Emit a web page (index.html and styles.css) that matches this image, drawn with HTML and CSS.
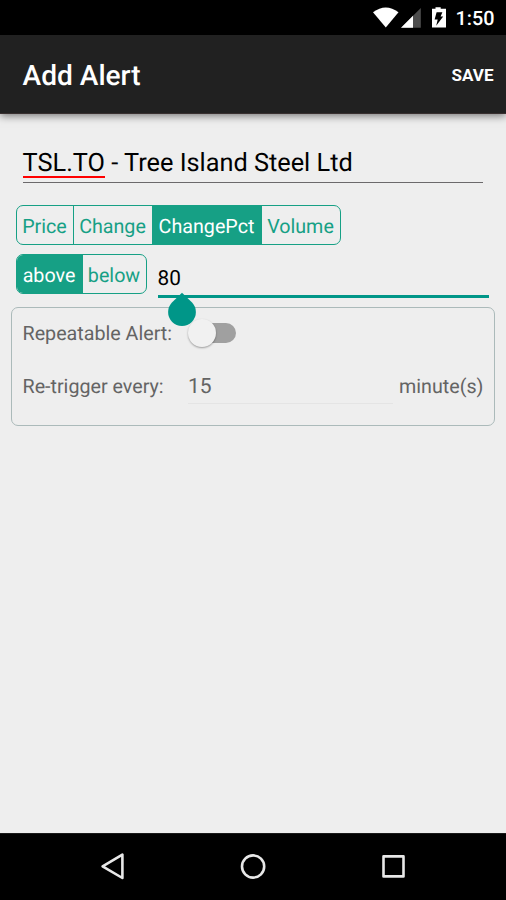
FILE: index.html
```html
<!DOCTYPE html>
<html lang="en">
<head>
<meta charset="utf-8">
<title>Add Alert</title>
<link rel="stylesheet" href="styles.css">
</head>
<body>
<div class="screen">
  <div class="status">
    <svg class="status-icons" viewBox="0 0 80 35" width="80" height="35">
      <path d="M3 12.2Q15.8 2.8 28.5 12.2L15.8 27.5Z" fill="#fff"/>
      <path d="M50.8 8V27.7H31Z" fill="#4d4d4d"/>
      <path d="M43 15.8V27.7H31Z" fill="#fff"/>
      <path d="M65.5 7.3h5.2v1.5H76v18.7H62V8.8h3.5Z" fill="#fff"/>
      <path d="M66.6 12.3h5.8l-1.8 4.3h2.6l-7 9.2 1.5-6.2h-3.1Z" fill="#000"/>
    </svg>
    <span class="clock">1:50</span>
  </div>
  <header class="appbar">
    <h1 class="title">Add Alert</h1>
    <button class="save">SAVE</button>
  </header>
  <main class="content">
    <div class="name"><span class="name-text"><span class="misspelt">TSL.TO</span> - Tree Island Steel Ltd</span></div>
    <div class="segments kind">
      <span class="seg">Price</span><span class="seg">Change</span><span class="seg on">ChangePct</span><span class="seg">Volume</span>
    </div>
    <div class="condition">
      <div class="segments direction"><span class="seg on">above</span><span class="seg">below</span></div>
      <div class="value"><span class="value-text">80</span>
        <svg class="handle" viewBox="0 0 30 34" width="30" height="34"><path d="M15 .7L24.8 10.2A13.9 13.9 0 1 1 5.2 10.2Z" fill="#009688"/></svg>
      </div>
    </div>
    <section class="panel">
      <div class="row repeat"><span class="label">Repeatable Alert:</span><span class="switch"><span class="thumb"></span></span></div>
      <div class="row trigger"><span class="label">Re-trigger every:</span><span class="interval">15</span><span class="unit">minute(s)</span></div>
    </section>
  </main>
  <nav class="nav">
    <svg viewBox="0 0 506 67" width="506" height="67" fill="none" stroke="#e8e8e8" stroke-width="2.6" stroke-linejoin="round">
      <path d="M122.4 21.6V45L102.6 33.3Z"/>
      <circle cx="253.1" cy="33.5" r="11.1"/>
      <rect x="383.5" y="23.4" width="20" height="20"/>
    </svg>
  </nav>
</div>
</body>
</html>
```

FILE: styles.css
```css
* { box-sizing: border-box; }
body { margin: 0; background: #eee; font-family: Roboto, "Liberation Sans", sans-serif; text-rendering: geometricPrecision; }
.screen { width: 506px; height: 900px; display: flex; flex-direction: column; overflow: hidden; }
.status { height: 35px; background: #000; color: #fff; display: flex; justify-content: flex-end; padding-right: 11.5px; gap: 5.5px; }
.clock { font-size: 19.8px; font-weight: 500; line-height: 37px; width: 39px; white-space: nowrap; }
.status-icons { flex: none; }
.appbar { height: 79px; background: #212121; border-bottom: 1px solid #382f2f; color: #fff; display: flex; align-items: center; justify-content: space-between; padding: 3px 12.5px 0 22.5px; box-shadow: 0 2px 8px rgba(0,0,0,.5); }
.title { margin: 0; font-size: 28.1px; font-weight: 500; line-height: 34px; }
.save { border: 0; padding: 0; margin-top: -2px; background: none; color: #fff; font: bold 17px/20px Roboto, sans-serif; }
.content { flex: 1; padding: 32px 11px 0; }
.name { margin: 0 12px; height: 37px; border-bottom: 1px solid #6b696b; font-size: 25.3px; line-height: 36px; white-space: nowrap; color: #000; }
.name-text { margin-left: -0.4px; }
.misspelt { display: inline-block; height: 32px; border-bottom: 2px solid #f00; vertical-align: top; }
.segments { display: grid; height: 40px; border: 1px solid #16a085; border-radius: 7px; overflow: hidden; margin-left: 5px; font-size: 19.7px; line-height: 41px; color: #16a085; }
.kind { grid-template-columns: 56px 79px 109px 79px; margin-top: 22px; width: 325px; }
.direction { grid-template-columns: 65px 64px; width: 131px; flex: none; }
.seg { text-align: center; white-space: nowrap; padding-right: 1px; }
.seg + .seg { border-left: 1px solid #16a085; }
.seg.on { background: #16a085; color: #fff; }
.condition { display: flex; margin-top: 9px; height: 44px; }
.value { position: relative; margin-left: 10.5px; width: 331.5px; height: 44px; border-bottom: 3px solid #009688; font-size: 20.8px; line-height: 51px; color: #000; }
.handle { position: absolute; left: 9.2px; top: 38px; z-index: 2; }
.panel { width: 484px; height: 119px; margin-top: 9px; border: 1px solid #abbaba; border-radius: 7px; padding: 0 10.5px; color: #646464; font-size: 19.7px; }
.row { display: flex; align-items: center; white-space: nowrap; }
.repeat { height: 50px; }
.trigger { height: 56px; }
.label { width: 165.5px; flex: none; }
.switch { width: 48px; height: 20px; border-radius: 10px; background: linear-gradient(to right, transparent 14px, #a0a0a0 14px); display: flex; align-items: center; }
.thumb { width: 28px; height: 28px; flex: none; border-radius: 50%; background: #f1f1f1; box-shadow: 0 1px 2px rgba(0,0,0,.35); }
.interval { width: 205px; height: 36px; line-height: 39px; font-size: 21px; border-bottom: 1px solid #e4e4e4; }
.unit { margin-left: 6px; }
.nav { height: 67px; background: #000; border-top: 1px solid #1a1a1a; }
.nav svg { display: block; margin-top: -1px; }
```
